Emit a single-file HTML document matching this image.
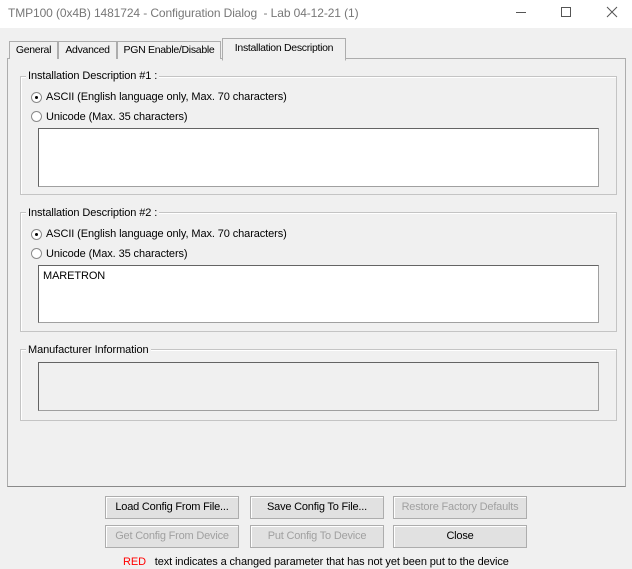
<!DOCTYPE html><html><head><style>
body{margin:0;width:632px;height:569px;background:#f0f0f0;font-family:"Liberation Sans",sans-serif;font-size:11px;color:#000;position:relative;overflow:hidden}
.a{position:absolute}
.title{left:0;top:0;width:632px;height:28px;background:#fff}
.t{white-space:nowrap;letter-spacing:-0.1px}
.panel{left:7px;top:58px;width:617px;height:427px;border:1px solid #adadad;border-bottom-color:#8a8a8a;background:#f0f0f0}
.tab{top:41px;height:17px;border:1px solid #adadad;border-bottom:none;background:#f0f0f0;line-height:17px;text-align:center;font-size:10.5px;letter-spacing:-0.3px;white-space:nowrap;overflow:hidden}
.grp{border:1px solid #c4c4c4;box-shadow:inset 1px 1px 0 #fff}
.lbl{background:#f0f0f0;padding:0 2px}
.box{background:#fff;border:1px solid #a0a0a0;border-top-color:#646464;border-left-color:#646464}
.rad{width:9px;height:9px;border-radius:50%;border:1px solid #8a8a8a;background:#fff}
.dot{width:3px;height:3px;border-radius:50%;background:#000;left:3px;top:3px}
.btn{height:21px;border:1px solid #adadad;background:#e1e1e1;text-align:center;line-height:21px;box-shadow:inset 1px 1px 0 #fff;letter-spacing:-0.2px}
.dis{color:#a0a0a0}
</style></head><body>
<div class="a title"></div>
<div class="a t" style="left:8px;top:6px;font-size:12px;color:#777">TMP100 (0x4B) 1481724 - Configuration Dialog&nbsp; - Lab 04-12-21 (1)</div>
<svg class="a" style="left:505px;top:0" width="127" height="26"><line x1="11" y1="12.5" x2="21" y2="12.5" stroke="#555"/><rect x="56.5" y="7.5" width="9" height="9" fill="none" stroke="#555"/><path d="M102 7 L112 17 M112 7 L102 17" stroke="#555"/></svg>
<div class="a panel"></div>
<div class="a tab" style="left:9px;width:47px">General</div>
<div class="a tab" style="left:58px;width:57px">Advanced</div>
<div class="a tab" style="left:117px;width:102px">PGN Enable/Disable</div>
<div class="a tab" style="left:222px;top:38px;height:21px;width:122px;border-bottom:1px solid #f0f0f0;line-height:19px">Installation Description</div>

<div class="a grp" style="left:20px;top:76px;width:595px;height:117px"></div>
<div class="a t lbl" style="left:26px;top:70px">Installation Description #1 :</div>
<div class="a rad" style="left:31px;top:92px"><div class="a dot"></div></div>
<div class="a t" style="left:46px;top:91px">ASCII (English language only, Max. 70 characters)</div>
<div class="a rad" style="left:31px;top:111px"></div>
<div class="a t" style="left:46px;top:111px">Unicode (Max. 35 characters)</div>
<div class="a box" style="left:38px;top:128px;width:559px;height:57px"></div>

<div class="a grp" style="left:20px;top:212px;width:595px;height:118px"></div>
<div class="a t lbl" style="left:26px;top:207px">Installation Description #2 :</div>
<div class="a rad" style="left:31px;top:229px"><div class="a dot"></div></div>
<div class="a t" style="left:46px;top:228px">ASCII (English language only, Max. 70 characters)</div>
<div class="a rad" style="left:31px;top:248px"></div>
<div class="a t" style="left:46px;top:248px">Unicode (Max. 35 characters)</div>
<div class="a box" style="left:38px;top:265px;width:559px;height:56px"></div>
<div class="a t" style="left:43px;top:270px">MARETRON</div>

<div class="a grp" style="left:20px;top:349px;width:595px;height:70px"></div>
<div class="a t lbl" style="left:26px;top:344px">Manufacturer Information</div>
<div class="a box" style="left:38px;top:362px;width:559px;height:47px;background:#f0f0f0"></div>

<div class="a btn" style="left:105px;top:496px;width:132px">Load Config From File...</div>
<div class="a btn" style="left:250px;top:496px;width:132px">Save Config To File...</div>
<div class="a btn dis" style="left:393px;top:496px;width:132px">Restore Factory Defaults</div>
<div class="a btn dis" style="left:105px;top:525px;width:132px">Get Config From Device</div>
<div class="a btn dis" style="left:250px;top:525px;width:132px">Put Config To Device</div>
<div class="a btn" style="left:393px;top:525px;width:132px">Close</div>
<div class="a t" style="left:123px;top:556px"><span style="color:#f00">RED</span>&nbsp;&nbsp; text indicates a changed parameter that has not yet been put to the device</div>
</body></html>
